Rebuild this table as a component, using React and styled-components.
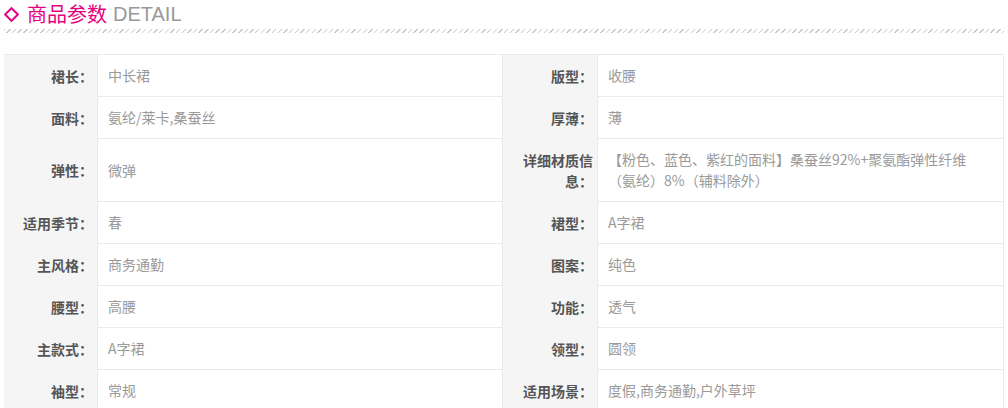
import React from 'react';
import styled, { createGlobalStyle } from 'styled-components';

const GlobalStyle = createGlobalStyle`
body{
    margin:0;
    background:#fff;
    font-family:"Liberation Sans","Noto Sans CJK SC",sans-serif;
}
`;

const Page = styled.div`
width:1000px;
padding-left:4px;
`;

const TitleBar = styled.div`
display:flex;
align-items:center;
height:28px;
font-size:20px;
line-height:28px;
`;

const Diamond = styled.span`
width:7px;
height:7px;
border:2px solid #e5007f;
transform:rotate(45deg);
margin:0 10px 0 2px;
`;

const TitleCn = styled.span`
color:#e5007f;
font-family:"Noto Sans CJK SC",sans-serif;
margin-right:6px;
`;

const TitleEn = styled.span`
color:#999;
`;

const Hatch = styled.div`
height:4px;
margin-top:1px;
background:repeating-linear-gradient(135deg,#c8c8c8 0 1px,transparent 1px 4px);
`;

const Table = styled.div`
margin-top:21px;
border-top:1px solid #eaeaea;
border-right:1px solid #eaeaea;
`;

const Row = styled.div`
display:grid;
grid-template-columns:94px 405px 95px 1fr;
`;

const Label = styled.div`
display:flex;
align-items:center;
justify-content:flex-end;
text-align:right;
background:#f5f5f5;
border-right:1px solid #eaeaea;
padding:10px 4px 10px 8px;
font-size:14px;
line-height:21px;
font-weight:bold;
color:#555;
font-family:"Noto Sans CJK SC",sans-serif;
`;

const Value = styled.div`
display:flex;
align-items:center;
border-bottom:1px solid #eaeaea;
border-right:${p => (p.$last ? 'none' : '1px solid #eaeaea')};
padding:10px 10px;
font-size:14px;
line-height:21px;
color:#9a9a9a;
font-family:"Noto Sans CJK SC",sans-serif;
`;

const rows = [
    ['裙长', '中长裙', '版型', '收腰'],
    ['面料', '氨纶/莱卡,桑蚕丝', '厚薄', '薄'],
    ['弹性', '微弹', '详细材质信息', '【粉色、蓝色、紫红的面料】桑蚕丝92%+聚氨酯弹性纤维（氨纶）8%（辅料除外）'],
    ['适用季节', '春', '裙型', 'A字裙'],
    ['主风格', '商务通勤', '图案', '纯色'],
    ['腰型', '高腰', '功能', '透气'],
    ['主款式', 'A字裙', '领型', '圆领'],
    ['袖型', '常规', '适用场景', '度假,商务通勤,户外草坪'],
];

const App = () => {
    return (
        <Page>
            <GlobalStyle />
            <TitleBar>
                <Diamond />
                <TitleCn>商品参数</TitleCn>
                <TitleEn>DETAIL</TitleEn>
            </TitleBar>
            <Hatch />
            <Table>
                {rows.map(([l1, v1, l2, v2]) => (
                    <Row key={l1}>
                        <Label>{l1}：</Label>
                        <Value>{v1}</Value>
                        <Label>{l2}：</Label>
                        <Value $last>{v2}</Value>
                    </Row>
                ))}
            </Table>
        </Page>
    );
};

export default App;
